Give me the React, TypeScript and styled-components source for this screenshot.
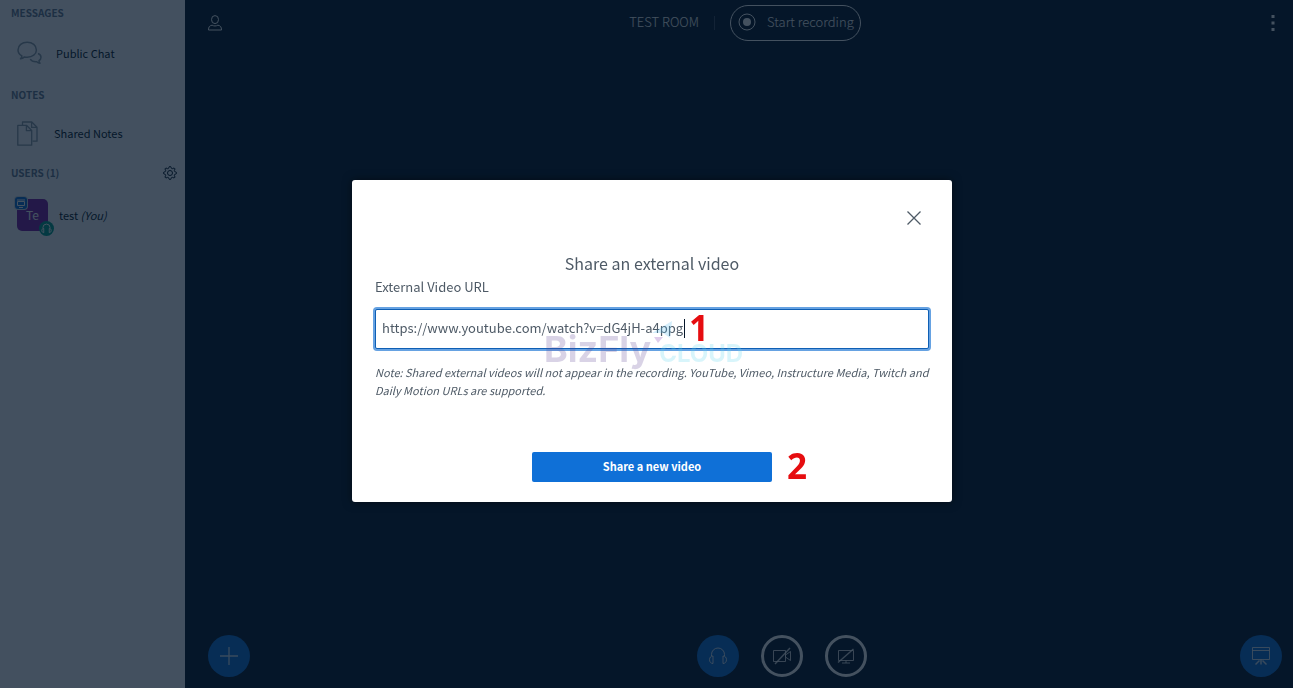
import React, { useState } from "react";
import styled, { createGlobalStyle, css } from "styled-components";

const GlobalStyle = createGlobalStyle`
  *, *::before, *::after { box-sizing: border-box; }
  body {
    margin: 0;
    background: #06172a;
    font-family: "Noto Sans CJK SC", "Noto Sans", sans-serif;
    font-size: 11px;
    line-height: 18px;
    color: #4e5a66;
  }
  button, input { font: inherit; }
  h1, h2, p, ul { margin: 0; padding: 0; }
`;

const Page = styled.div`
  display: flex;
  min-height: 100vh;
`;

const Sidebar = styled.aside`
  flex: 0 0 185px;
  padding: 4px 8px 0 11px;
  background: #fafcff;
`;

const SectionHead = styled.div`
  display: flex;
  align-items: center;
  justify-content: space-between;
  height: 18px;
`;

const SectionTitle = styled.h2`
  font-size: 10px;
  font-weight: 700;
  line-height: 18px;
  color: #667890;
`;

const SideList = styled.ul`
  display: flex;
  flex-direction: column;
  list-style: none;
`;

const SideLink = styled.a<{ $height: number; $gap: number }>`
  display: flex;
  align-items: center;
  gap: ${(p) => p.$gap}px;
  height: ${(p) => p.$height}px;
  padding: 0 0 2px 6px;
  color: #06172a;
  text-decoration: none;

  svg { color: #8b9aa8; }
`;

const IconButton = styled.button<{ $width?: number }>`
  display: flex;
  align-items: center;
  justify-content: center;
  width: ${(p) => p.$width ?? 28}px;
  height: 28px;
  padding: 0;
  border: 0;
  background: transparent;
  color: inherit;
  cursor: pointer;
`;

const GearButton = styled(IconButton)`
  width: 14px;
  height: 14px;
  color: #06172a;
`;

const UserRow = styled.li`
  display: flex;
  align-items: center;
  gap: 11px;
  height: 66px;
  padding-left: 6px;
  color: #06172a;
`;

const Avatar = styled.div`
  position: relative;
  display: flex;
  align-items: center;
  justify-content: center;
  width: 31px;
  height: 32px;
  border-radius: 5px;
  background: #7b1fa2;
  color: #fff;
  font-size: 12px;
`;

const PresenterBadge = styled.span`
  position: absolute;
  top: -2px;
  left: -2px;
  display: flex;
  align-items: center;
  justify-content: center;
  width: 12px;
  height: 12px;
  border-radius: 3px;
  background: #0f70d7;
  box-shadow: 0 0 0 1px #d5dde6;
`;

const VoiceBadge = styled.span`
  position: absolute;
  right: -6px;
  bottom: -5px;
  display: flex;
  align-items: center;
  justify-content: center;
  width: 15px;
  height: 15px;
  border-radius: 50%;
  background: #00a08c;
`;

const Main = styled.main`
  flex: 1;
  display: flex;
  flex-direction: column;
  justify-content: space-between;
  min-width: 0;
  color: #fff;
`;

const barGrid = css`
  display: grid;
  grid-template-columns: 1fr auto 1fr;
  align-items: center;
`;

const TopBar = styled.header`
  ${barGrid}
  padding: 5px 4px 0 16px;
`;

const RoomInfo = styled.div`
  display: flex;
  align-items: center;
  font-size: 13px;
  font-weight: 300;
`;

const RoomName = styled.h1`
  padding-bottom: 2px;
  font-size: 13px;
  font-weight: 300;
  line-height: 18px;
`;

const Divider = styled.span`
  width: 1px;
  height: 14px;
  margin: 0 15px;
  background: #3c4a5c;
`;

const RecordButton = styled.button`
  display: flex;
  align-items: center;
  gap: 11px;
  height: 36px;
  padding: 0 6px 2px 7px;
  border: 1px solid #fff;
  border-radius: 18px;
  background: transparent;
  color: inherit;
  cursor: pointer;
`;

const Trailing = styled.div`
  display: flex;
  justify-content: flex-end;
`;

const ActionsBar = styled.footer`
  ${barGrid}
  padding: 0 11px 11px 23px;
`;

const MediaActions = styled.div`
  display: flex;
  gap: 22px;
  padding-left: 74px;
`;

const RoundButton = styled.button<{ $outlined?: boolean }>`
  display: flex;
  align-items: center;
  justify-content: center;
  width: 42px;
  height: 42px;
  padding: 0;
  border: ${(p) => (p.$outlined ? "3px solid #fff" : "0")};
  border-radius: 50%;
  background: ${(p) => (p.$outlined ? "transparent" : "#0f70d7")};
  color: rgba(255, 255, 255, 0.8);
  cursor: pointer;
`;

const Overlay = styled.div`
  position: fixed;
  inset: 0;
  display: flex;
  align-items: center;
  justify-content: center;
  padding: 0 0 6px 11px;
  background: rgba(6, 23, 42, 0.75);
`;

const Dialog = styled.form`
  display: flex;
  flex-direction: column;
  width: 600px;
  max-width: 100%;
  padding: 24px 23px 20px;
  border-radius: 3px;
  background: #fff;
  box-shadow: 0 0 10px rgba(0, 0, 0, 0.5);
`;

const CloseButton = styled(IconButton)`
  align-self: flex-end;
  margin-right: 1px;
  color: #4e5a66;
`;

const DialogTitle = styled.h2`
  margin-top: 19px;
  font-size: 16px;
  font-weight: 400;
  line-height: 24px;
  text-align: center;
`;

const FieldLabel = styled.label`
  margin-top: 3px;
  font-size: 13px;
  line-height: 18px;
`;

const Field = styled.div`
  position: relative;
  margin-top: 13px;
`;

const UrlInput = styled.input`
  display: block;
  width: 100%;
  height: 40px;
  padding: 0 6px 4px;
  border: 1px solid #0f5fb4;
  border-radius: 2px;
  outline: none;
  background: #fff;
  box-shadow: 0 0 0 2px #66a2e2;
  color: #4e5a66;
  font-size: 13px;
  caret-color: transparent;
`;

const Caret = styled.span`
  position: absolute;
  top: 10px;
  left: 309px;
  width: 1px;
  height: 19px;
  background: #06172a;
`;

const Marker = styled.span`
  position: absolute;
  color: #e60d10;
  font-family: "Open Sans", sans-serif;
  font-size: 35px;
  font-weight: 700;
  line-height: 40px;
`;

const FieldMarker = styled(Marker)`
  top: -1px;
  left: 314px;
`;

const SubmitMarker = styled(Marker)`
  top: -6px;
  left: 255px;
`;

const Watermark = styled.div`
  position: absolute;
  top: 20px;
  left: 169px;
  display: flex;
  align-items: baseline;
  gap: 8px;
  font-family: Inter, sans-serif;
  font-size: 36px;
  font-weight: 700;
  line-height: 40px;
  color: rgba(98, 70, 150, 0.24);
  pointer-events: none;
`;

const WatermarkCloud = styled.span`
  font-size: 24px;
  font-weight: 700;
  color: rgba(90, 215, 240, 0.24);
`;

const WatermarkSpark = styled.svg`
  position: absolute;
  top: -9px;
  left: 106px;
`;

const Note = styled.p`
  margin-top: 14px;
  font-size: 11px;
  font-style: italic;
  line-height: 18px;
`;

const Submit = styled.div`
  position: relative;
  align-self: center;
  width: 240px;
  margin-top: 53px;
`;

const SubmitButton = styled.button`
  display: block;
  width: 100%;
  height: 30px;
  padding: 0 0 2px;
  border: 0;
  border-radius: 2px;
  background: #0f70d7;
  color: #fff;
  font-size: 11px;
  font-weight: 700;
  line-height: 18px;
  cursor: pointer;
`;

type IconProps = {
  w: number;
  h: number;
  box?: string;
  stroke?: number;
  children: React.ReactNode;
};

const Icon = ({ w, h, box, stroke = 1, children }: IconProps) => (
  <svg
    width={w}
    height={h}
    viewBox={box ?? `0 0 ${w} ${h}`}
    fill="none"
    stroke="currentColor"
    strokeWidth={stroke}
    strokeLinejoin="round"
    aria-hidden="true"
  >
    {children}
  </svg>
);

const ChatIcon = () => (
  <Icon w={25} h={24} stroke={1.5}>
    <path d="M3.5 17.8c1-.8 1.400-1.700 1.400-3C2.300 13.400 1 11.300 1 8.900 1 4.500 5 1.300 10.200 1.300s9.200 3.200 9.200 7.600-4 7.300-9.200 7.300c-1 0-1.900-.1-2.700-.3-1.100 1-2.500 1.700-4 1.900z" />
    <path d="M21 12.500c1.900.7 3 2 3 3.700 0 1.400-.8 2.700-2 3.500 0 1.100.3 1.800 1 2.600-1.300-.1-2.300-.6-3.200-1.600-3.200.3-5.300-.6-6.600-2.600" />
  </Icon>
);

const NotesIcon = () => (
  <Icon w={21} h={25} stroke={1.3}>
    <path d="M5.500 4V1h9.300l5.200 5.200v14h-4.500M14.600 1v5.400H20" />
    <path d="M.8 4.300h8.700l5.200 5.200v14.700H.8zM9.400 4.300v5.400h5.300" />
  </Icon>
);

const gearPoints = Array.from({ length: 32 }, (_, i) => {
  const r = i % 4 < 2 ? 6.5 : 4.9;
  const a = ((i - 0.5) * Math.PI) / 16;
  return `${(7 + r * Math.cos(a)).toFixed(2)},${(7 + r * Math.sin(a)).toFixed(2)}`;
}).join(" ");

const GearIcon = () => (
  <Icon w={14} h={14} stroke={1}>
    <polygon points={gearPoints} />
    <circle cx="7" cy="7" r="2.5" />
  </Icon>
);

const PersonIcon = () => (
  <Icon w={14} h={16}>
    <ellipse cx="7" cy="4.600" rx="3.500" ry="4" />
    <path d="M.5 15c0-3 1-4.400 3.600-4.800 1.800 1 4 1 5.800 0C12.500 10.600 13.500 12 13.500 15z" />
  </Icon>
);

const HeadphonesIcon = ({ size = 20, stroke = 1 }: { size?: number; stroke?: number }) => (
  <Icon w={size} h={size} box="0 0 20 20" stroke={stroke}>
    <path d="M3.500 10V8.500a6.500 6.500 0 0 1 13 0V10" />
    <path d="M5 10v7.500C3 17.500 1.500 16 1.500 13.700S3 10 5 10zM15 10v7.500c2 0 3.500-1.500 3.500-3.800S17 10 15 10z" />
  </Icon>
);

const CameraOffIcon = () => (
  <Icon w={20} h={18}>
    <path d="M1.500 3.500h12v11h-12zM13.500 8l5-3.500v9l-5-3.500z" />
    <path d="M3 17 18 1" strokeWidth="1.400" />
  </Icon>
);

const ScreenOffIcon = () => (
  <Icon w={18} h={18}>
    <path d="M1.500 3.500h15v10h-15zM9 13.500V16M5 16h8" />
    <path d="M1 15.500 16.500 2" strokeWidth="1.400" />
  </Icon>
);

const PresentationIcon = () => (
  <Icon w={20} h={20}>
    <path d="M1.500 1.500h17v12h-17zM1.500 4.500h17" />
    <path d="M10 13.500v5M8.500 14.500l-4 4M11.500 14.500l4 4" strokeWidth="1.500" />
  </Icon>
);

export default function App() {
  const [url, setUrl] = useState("https://www.youtube.com/watch?v=dG4jH-a4ppg");

  return (
    <>
      <GlobalStyle />
      <Page>
        <Sidebar>
          <SectionHead>
            <SectionTitle>MESSAGES</SectionTitle>
          </SectionHead>
          <SideLink href="#chat" $height={64} $gap={14}>
            <ChatIcon />
            Public Chat
          </SideLink>
          <SectionHead>
            <SectionTitle>NOTES</SectionTitle>
          </SectionHead>
          <SideLink href="#notes" $height={60} $gap={16}>
            <NotesIcon />
            Shared Notes
          </SideLink>
          <SectionHead>
            <SectionTitle>USERS (1)</SectionTitle>
            <GearButton type="button" aria-label="Manage users">
              <GearIcon />
            </GearButton>
          </SectionHead>
          <SideList>
            <UserRow>
              <Avatar>
                Te
                <PresenterBadge>
                  <Icon w={10} h={10}>
                    <path d="M1 2h8M1.500 3.500h7v4h-7zM3 9.500h4" />
                  </Icon>
                </PresenterBadge>
                <VoiceBadge>
                  <HeadphonesIcon size={11} stroke={1.8} />
                </VoiceBadge>
              </Avatar>
              <span>
                test <em>(You)</em>
              </span>
            </UserRow>
          </SideList>
        </Sidebar>

        <Main>
          <TopBar>
            <IconButton type="button" aria-label="Toggle user list">
              <PersonIcon />
            </IconButton>
            <RoomInfo>
              <RoomName>TEST ROOM</RoomName>
              <Divider />
              <RecordButton type="button">
                <Icon w={18} h={18}>
                  <circle cx="9" cy="9" r="8" />
                  <circle cx="9" cy="9" r="4" fill="currentColor" stroke="none" />
                </Icon>
                Start recording
              </RecordButton>
            </RoomInfo>
            <Trailing>
              <IconButton type="button" aria-label="Options" $width={32}>
                <Icon w={4} h={16}>
                  <path d="M2 0v3M2 6.500v3M2 13v3" strokeWidth="3" />
                </Icon>
              </IconButton>
            </Trailing>
          </TopBar>

          <ActionsBar>
            <RoundButton type="button" aria-label="Actions">
              <Icon w={18} h={18}>
                <path d="M9 0v18M0 9h18" strokeWidth="1.300" />
              </Icon>
            </RoundButton>
            <MediaActions>
              <RoundButton type="button" aria-label="Leave audio">
                <HeadphonesIcon />
              </RoundButton>
              <RoundButton type="button" aria-label="Share webcam" $outlined>
                <CameraOffIcon />
              </RoundButton>
              <RoundButton type="button" aria-label="Share screen" $outlined>
                <ScreenOffIcon />
              </RoundButton>
            </MediaActions>
            <Trailing>
              <RoundButton type="button" aria-label="Restore presentation">
                <PresentationIcon />
              </RoundButton>
            </Trailing>
          </ActionsBar>
        </Main>
      </Page>

      <Overlay>
        <Dialog
          role="dialog"
          aria-labelledby="share-title"
          onSubmit={(e) => e.preventDefault()}
        >
          <CloseButton type="button" aria-label="Close">
            <Icon w={14} h={14} stroke={1.3}>
              <path d="M.5.5l13 13M13.500.5l-13 13" />
            </Icon>
          </CloseButton>
          <DialogTitle id="share-title">Share an external video</DialogTitle>
          <FieldLabel htmlFor="video-url">External Video URL</FieldLabel>
          <Field>
            <UrlInput
              id="video-url"
              type="text"
              value={url}
              onChange={(e) => setUrl(e.target.value)}
            />
            <Caret />
            <Watermark aria-hidden="true">
              BizFly
              <WatermarkCloud>CLOUD</WatermarkCloud>
              <WatermarkSpark width="24" height="28" viewBox="0 0 24 28">
                <path d="M2 13 22 1 20 18 13 13z" fill="rgba(90,190,240,.26)" />
                <path d="M4 17h9l-5 6z" fill="rgba(150,90,190,.3)" />
              </WatermarkSpark>
            </Watermark>
            <FieldMarker>1</FieldMarker>
          </Field>
          <Note>
            Note: Shared external videos will not appear in the recording. YouTube, Vimeo,
            Instructure Media, Twitch and Daily Motion URLs are supported.
          </Note>
          <Submit>
            <SubmitButton type="submit">Share a new video</SubmitButton>
            <SubmitMarker>2</SubmitMarker>
          </Submit>
        </Dialog>
      </Overlay>
    </>
  );
}
